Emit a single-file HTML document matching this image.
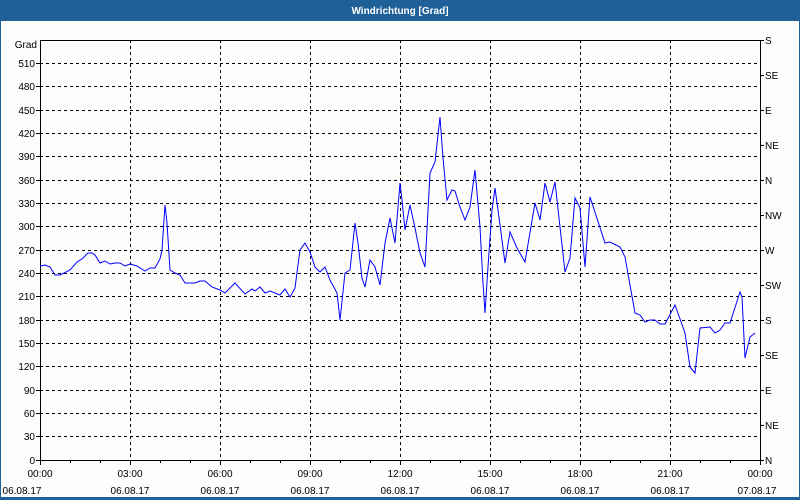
<!DOCTYPE html>
<html><head><meta charset="utf-8"><style>
html,body{margin:0;padding:0;width:800px;height:500px;overflow:hidden;background:#fff}
svg{display:block}
text{font-family:"Liberation Sans",Arial,sans-serif;font-size:10px;fill:#000}
</style></head><body>
<svg width="800" height="500" xmlns="http://www.w3.org/2000/svg">
<rect x="0" y="0" width="800" height="500" fill="#fdfdfd"/>
<rect x="0" y="0" width="800" height="21" fill="#1f6098"/>
<rect x="0" y="0" width="1" height="500" fill="#1f6098"/>
<rect x="799" y="0" width="1" height="500" fill="#1f6098"/>
<rect x="0" y="497" width="800" height="3" fill="#1f6098"/>
<text x="400" y="14" text-anchor="middle" style="font-weight:bold;fill:#fff;font-size:10px">Windrichtung [Grad]</text>
<g stroke="#000" stroke-width="1" stroke-dasharray="3,3" fill="none">
<path d="M40 63.5H760M40 86.5H760M40 110.5H760M40 133.5H760M40 156.5H760M40 180.5H760M40 203.5H760M40 226.5H760M40 250.5H760M40 273.5H760M40 296.5H760M40 320.5H760M40 343.5H760M40 366.5H760M40 390.5H760M40 413.5H760M40 436.5H760"/>
<path d="M130.5 40V460M220.5 40V460M310.5 40V460M400.5 40V460M490.5 40V460M580.5 40V460M670.5 40V460"/>
</g>
<g stroke="#000" stroke-width="1" fill="none">
<path d="M40.5 40V460.5H760.5V40M40 40.5H760"/>
<path d="M40.5 460V465M70.5 460V463M100.5 460V463M130.5 460V465M160.5 460V463M190.5 460V463M220.5 460V465M250.5 460V463M280.5 460V463M310.5 460V465M340.5 460V463M370.5 460V463M400.5 460V465M430.5 460V463M460.5 460V463M490.5 460V465M520.5 460V463M550.5 460V463M580.5 460V465M610.5 460V463M640.5 460V463M670.5 460V465M700.5 460V463M730.5 460V463M760.5 460V465"/>
<path d="M760 40.5h4M760 75.5h4M760 110.5h4M760 145.5h4M760 180.5h4M760 215.5h4M760 250.5h4M760 285.5h4M760 320.5h4M760 355.5h4M760 390.5h4M760 425.5h4M760 460.5h4"/>
<path d="M36 63.5h4M36 86.5h4M36 110.5h4M36 133.5h4M36 156.5h4M36 180.5h4M36 203.5h4M36 226.5h4M36 250.5h4M36 273.5h4M36 296.5h4M36 320.5h4M36 343.5h4M36 366.5h4M36 390.5h4M36 413.5h4M36 436.5h4M36 460.5h4"/>
</g>
<g text-anchor="end">
<text x="37" y="48">Grad</text>
<text x="35" y="67">510</text><text x="35" y="90">480</text><text x="35" y="114">450</text><text x="35" y="137">420</text><text x="35" y="160">390</text><text x="35" y="184">360</text><text x="35" y="207">330</text><text x="35" y="230">300</text><text x="35" y="254">270</text><text x="35" y="277">240</text><text x="35" y="300">210</text><text x="35" y="324">180</text><text x="35" y="347">150</text><text x="35" y="370">120</text><text x="35" y="394">90</text><text x="35" y="417">60</text><text x="35" y="440">30</text><text x="35" y="464">0</text>
</g>
<g>
<text x="765" y="44">S</text><text x="765" y="79">SE</text><text x="765" y="114">E</text><text x="765" y="149">NE</text><text x="765" y="184">N</text><text x="765" y="219">NW</text><text x="765" y="254">W</text><text x="765" y="289">SW</text><text x="765" y="324">S</text><text x="765" y="359">SE</text><text x="765" y="394">E</text><text x="765" y="429">NE</text><text x="765" y="464">N</text>
</g>
<g text-anchor="middle">
<text x="40" y="477">00:00</text><text x="22" y="494">06.08.17</text>
<text x="130" y="477">03:00</text><text x="130" y="494">06.08.17</text>
<text x="220" y="477">06:00</text><text x="220" y="494">06.08.17</text>
<text x="310" y="477">09:00</text><text x="310" y="494">06.08.17</text>
<text x="400" y="477">12:00</text><text x="400" y="494">06.08.17</text>
<text x="490" y="477">15:00</text><text x="490" y="494">06.08.17</text>
<text x="580" y="477">18:00</text><text x="580" y="494">06.08.17</text>
<text x="670" y="477">21:00</text><text x="670" y="494">06.08.17</text>
<text x="760" y="477">00:00</text><text x="757" y="494">07.08.17</text>
</g>
<polyline fill="none" stroke="#0000ff" stroke-width="1" points="40,266 45,265 50,267 55,275 60,275 70,270 77,262 82,259 88,253 92,253 95,255 100,263 105,261 110,264 115,263 120,263 125,266 130,264 137,266 145,271 150,268 155,268 160,259 162,250 165,205 167,223 170,270 175,273 180,275 185,283 195,283 200,281 205,281 212,287 220,290 225,293 235,283 245,294 252,289 255,291 260,287 265,293 270,291 280,295 285,289 290,297 295,288 300,250 305,243 310,252 315,267 320,272 325,267 330,280 337,293 340,320 345,273 350,270 355,223 358,243 362,278 365,287 370,260 375,267 380,285 385,243 390,218 395,243 400,183 402,200 405,230 410,205 415,228 420,253 425,267 430,173 435,162 440,117 443,158 447,200 452,190 455,191 460,207 465,220 470,207 475,170 480,227 483,283 485,313 488,267 492,210 495,188 500,225 505,263 510,232 517,248 525,262 535,203 540,220 545,183 550,202 555,182 565,272 570,258 575,198 580,208 585,267 590,197 605,243 610,242 620,247 625,257 635,313 640,315 645,322 650,320 655,320 660,324 665,324 675,305 685,333 690,367 695,373 700,328 710,327 715,333 720,330 725,323 730,323 740,292 742,297 745,358 750,337 755,333"/>
</svg>
</body></html>
